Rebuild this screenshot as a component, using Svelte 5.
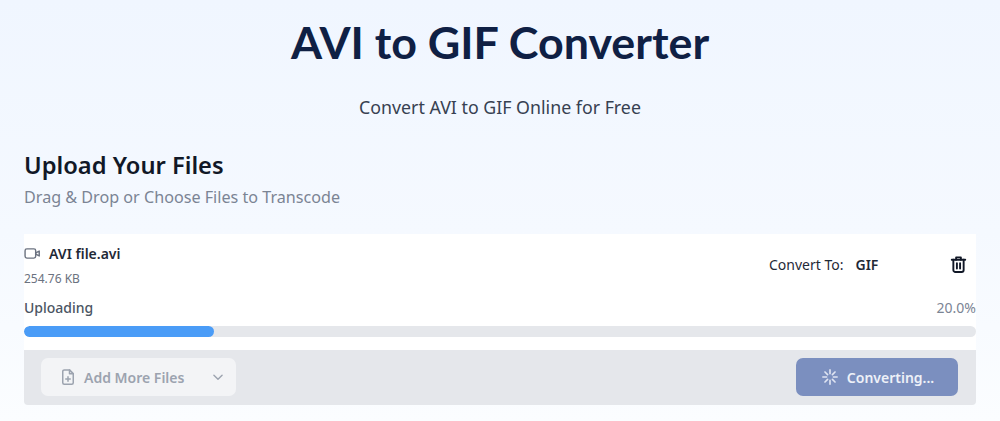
<script>
  const title = 'AVI to GIF Converter';
  const progress = 20;
</script>

<div class="page">
  <header class="hero">
    <h1>{title}</h1>
    <p>Convert AVI to GIF Online for Free</p>
  </header>
  <section class="upload">
    <h2>Upload Your Files</h2>
    <p class="sub">Drag &amp; Drop or Choose Files to Transcode</p>
    <div class="panel">
      <div class="file">
        <div class="row">
          <div class="info">
            <div class="name">
              <svg width="17" height="17" viewBox="0 0 24 24" fill="none" stroke="#6b7280" stroke-width="2" stroke-linecap="round" stroke-linejoin="round"><rect x="1.5" y="5.5" width="15" height="13" rx="2.5"/><path d="M16.5 11l5-2.5v7l-5-2.5z"/></svg>
              <span>AVI file.avi</span>
            </div>
            <div class="size">254.76 KB</div>
          </div>
          <div class="target"><span class="lbl">Convert To:</span><span class="fmt">GIF</span></div>
          <svg class="trash" width="19" height="19" viewBox="0 0 24 24" fill="none" stroke="#111827" stroke-width="2.4" stroke-linecap="round" stroke-linejoin="round"><path d="M3.5 6h17"/><path d="M9 6V3h6v3"/><path d="M5.5 6v13a2.5 2.5 0 0 0 2.5 2.5h8a2.5 2.5 0 0 0 2.5-2.5V6"/><path d="M10 10.5v6.5M14 10.5v6.5"/></svg>
        </div>
        <div class="status"><span class="up">Uploading</span><span class="pct">20.0%</span></div>
        <div class="track"><div class="fill" style="width:{progress}%"></div></div>
      </div>
      <div class="actions">
        <button class="add" disabled>
          <svg width="18" height="18" viewBox="0 0 24 24" fill="none" stroke="#9ca3af" stroke-width="2" stroke-linecap="round" stroke-linejoin="round"><path d="M14 2.5H7a2 2 0 0 0-2 2v15a2 2 0 0 0 2 2h10a2 2 0 0 0 2-2V7.5z"/><path d="M14 2.5v5h5"/><path d="M12 11.5v6M9 14.5h6"/></svg>
          <span>Add More Files</span>
          <svg class="chev" width="14" height="14" viewBox="0 0 24 24" fill="none" stroke="#9ca3af" stroke-width="2.4" stroke-linecap="round" stroke-linejoin="round"><path d="M5 9l7 7 7-7"/></svg>
        </button>
        <button class="convert" disabled>
          <svg width="18" height="18" viewBox="0 0 24 24" fill="none" stroke="#dfe4f2" stroke-width="2.2" stroke-linecap="round"><path d="M12 2.5v5M12 16.5v5M2.5 12h5M16.5 12h5M5.3 5.3l3.5 3.5M15.2 15.2l3.5 3.5M5.3 18.7l3.5-3.5M15.2 8.8l3.5-3.5"/></svg>
          <span>Converting...</span>
        </button>
      </div>
    </div>
  </section>
</div>

<style>
  :global(body) {
    margin: 0;
    background: #fff;
  }
  .page {
    height: 421px;
    box-sizing: border-box;
    overflow: hidden;
    padding: 0 24px;
    font-family: "Noto Sans", "Open Sans", sans-serif;
    background: linear-gradient(180deg, #f0f6ff 0%, #f5f9ff 55%, #fbfdff 100%);
  }
  .hero { text-align: center; }
  h1 {
    margin: 0;
    padding-top: 12px;
    font-family: Lato, sans-serif;
    font-size: 44.8px;
    line-height: 60px;
    font-weight: 700;
    color: #0f2044;
  }
  .hero p {
    margin: 21px 0 0;
    font-size: 17.8px;
    line-height: 28px;
    color: #374151;
  }
  .upload { margin-top: 28px; }
  h2 {
    margin: 0;
    font-size: 23.7px;
    line-height: 32px;
    font-weight: 600;
    color: #111827;
  }
  .sub {
    margin: 4px 0 0;
    font-size: 16.15px;
    line-height: 24px;
    color: #7b8494;
  }
  .panel { margin-top: 25px; }
  .file {
    background: #fff;
    height: 116px;
    box-sizing: border-box;
    padding-top: 10px;
  }
  .row { display: flex; align-items: center; height: 42px; }
  .info { flex: 1; }
  .name {
    display: flex;
    align-items: center;
    gap: 8px;
    font-size: 14px;
    line-height: 20px;
    font-weight: 600;
    color: #1f2937;
  }
  .size {
    margin-top: 7px;
    font-size: 12px;
    line-height: 16px;
    color: #6b7280;
  }
  .target { display: flex; gap: 12px; font-size: 14px; color: #1f2937; width: 180px; margin-bottom: 2px; }
  .fmt { font-weight: 600; }
  .trash { margin-right: 8px; margin-bottom: 2px; }
  .status {
    display: flex;
    justify-content: space-between;
    margin-top: 12px;
    font-size: 14px;
    line-height: 20px;
  }
  .up { font-weight: 500; color: #4b5563; }
  .pct { color: #7b8494; }
  .track {
    margin-top: 8px;
    height: 11px;
    border-radius: 6px;
    background: #e5e7eb;
    overflow: hidden;
  }
  .fill { height: 100%; background: #4a9cf7; border-radius: 6px; }
  .actions {
    height: 55px;
    box-sizing: border-box;
    padding: 0 18px 1px 17px;
    background: #e5e7eb;
    border-radius: 0 0 4px 4px;
    display: flex;
    align-items: center;
    justify-content: space-between;
  }
  button {
    font: inherit;
    font-size: 14px;
    font-weight: 600;
    border: 0;
    border-radius: 7px;
    height: 38px;
    display: flex;
    align-items: center;
    box-sizing: border-box;
  }
  .add {
    width: 195px;
    padding: 0 11px 0 18px;
    gap: 7px;
    background: #f3f4f6;
    color: #9ca3af;
  }
  .chev { margin-left: auto; }
  .convert {
    width: 162px;
    justify-content: center;
    gap: 8px;
    padding: 0 6px 0 7px;
    background: #7b8fbf;
    color: #eef1f8;
  }
</style>
